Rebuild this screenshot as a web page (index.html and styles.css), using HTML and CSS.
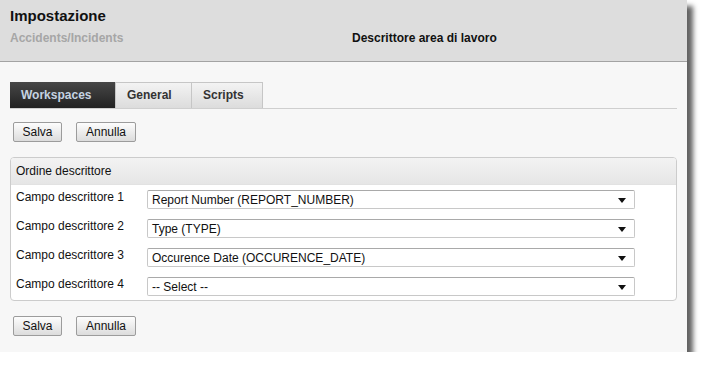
FILE: index.html
```html
<!DOCTYPE html>
<html>
<head>
<meta charset="utf-8">
<link rel="stylesheet" href="styles.css">
</head>
<body>
<div class="window">
  <div class="header">
    <div class="title">Impostazione</div>
    <div class="subrow">
      <div class="subtitle">Accidents/Incidents</div>
      <div class="context">Descrittore area di lavoro</div>
    </div>
  </div>
  <div class="content">
    <div class="tabs">
      <div class="tab active">Workspaces</div>
      <div class="tab">General</div>
      <div class="tab">Scripts</div>
    </div>
    <div class="actions">
      <button class="btn btn-salva">Salva</button>
      <button class="btn btn-annulla">Annulla</button>
    </div>
    <div class="panel">
      <div class="panel-head">Ordine descrittore</div>
      <div class="panel-body">
        <div class="row">
          <div class="label">Campo descrittore 1</div>
          <div class="select"><span>Report Number (REPORT_NUMBER)</span><i class="arrow"></i></div>
        </div>
        <div class="row">
          <div class="label">Campo descrittore 2</div>
          <div class="select"><span>Type (TYPE)</span><i class="arrow"></i></div>
        </div>
        <div class="row">
          <div class="label">Campo descrittore 3</div>
          <div class="select"><span>Occurence Date (OCCURENCE_DATE)</span><i class="arrow"></i></div>
        </div>
        <div class="row">
          <div class="label">Campo descrittore 4</div>
          <div class="select"><span>-- Select --</span><i class="arrow"></i></div>
        </div>
      </div>
    </div>
    <div class="actions bottom">
      <button class="btn btn-salva">Salva</button>
      <button class="btn btn-annulla">Annulla</button>
    </div>
  </div>
</div>
</body>
</html>
```
FILE: styles.css
```css
html, body {
  margin: 0;
  padding: 0;
  background: #ffffff;
}
body {
  font-family: "Liberation Sans", Arial, sans-serif;
  font-size: 12px;
  color: #000;
}
.window {
  width: 687px;
  height: 352px;
  background: #f7f7f7;
  box-shadow: 6px 6px 5px rgba(0, 0, 0, 0.62);
  display: flex;
  flex-direction: column;
}
.header {
  background: #dddddd;
  border-bottom: 1px solid #a3a3a3;
  height: 62px;
  box-sizing: border-box;
  padding: 7px 10px 0 10px;
}
.title {
  font-size: 15px;
  font-weight: bold;
  line-height: 18px;
  color: #111;
}
.subrow {
  display: flex;
  margin-top: 6px;
  line-height: 14px;
  font-weight: bold;
  font-size: 12px;
}
.subtitle {
  width: 342px;
  color: #a6a6a6;
}
.context {
  color: #111;
}
.content {
  flex: 1;
  padding: 20px 10px 0 10px;
}
.tabs {
  display: flex;
  height: 26px;
  border-bottom: 1px solid #cfcfcf;
}
.tab {
  box-sizing: border-box;
  height: 26px;
  line-height: 25px;
  font-weight: bold;
  color: #333;
  padding: 0 10px;
  border: 1px solid #c6c6c6;
  border-bottom: none;
  background: linear-gradient(#f3f3f3, #dcdcdc);
}
.tab:nth-child(2) { width: 76px; padding-left: 11px; border-right: none; }
.tab:nth-child(3) { width: 72px; padding-left: 11px; }
.tab.active {
  width: 105px;
  padding-left: 11px;
  line-height: 26px;
  background: linear-gradient(#474747, #222222);
  border: none;
  color: #c5d3e2;
}
.actions {
  display: flex;
  gap: 14px;
  padding: 13px 0 0 3px;
}
.actions.bottom {
  padding-top: 15px;
}
.btn {
  font-family: "Liberation Sans", Arial, sans-serif;
  font-size: 12px;
  height: 20px;
  padding: 0;
  margin: 0;
  border: 1px solid #9c9c9c;
  border-radius: 2px;
  background: linear-gradient(#fdfdfd, #dcdcdc);
  color: #111;
  line-height: 18px;
}
.btn-salva { width: 49px; }
.btn-annulla { width: 60px; }
.panel {
  margin-top: 15px;
  border: 1px solid #cccccc;
  border-radius: 4px;
  background: #ffffff;
  overflow: hidden;
}
.panel-head {
  height: 27px;
  line-height: 26px;
  padding-left: 5px;
  background: linear-gradient(#f3f3f3, #e6e6e6);
  border-bottom: 1px solid #e2e2e2;
  box-sizing: border-box;
  color: #111;
}
.panel-body {
  padding: 5px 0 4px 0;
  display: flex;
  flex-direction: column;
  gap: 10px;
}
.row {
  display: flex;
  align-items: flex-start;
}
.label {
  width: 136px;
  padding-left: 5px;
  box-sizing: border-box;
  line-height: 15px;
  color: #111;
}
.select {
  width: 488px;
  height: 19px;
  box-sizing: border-box;
  border: 1px solid #c8c8c8;
  border-top-color: #a9a9a9;
  border-radius: 2px;
  background: #fff;
  display: flex;
  align-items: center;
  justify-content: space-between;
  padding: 1px 8px 0 4px;
  color: #111;
}
.arrow {
  width: 0;
  height: 0;
  border-left: 4px solid transparent;
  border-right: 4px solid transparent;
  border-top: 5px solid #111;
  margin-top: 1px;
}
```
